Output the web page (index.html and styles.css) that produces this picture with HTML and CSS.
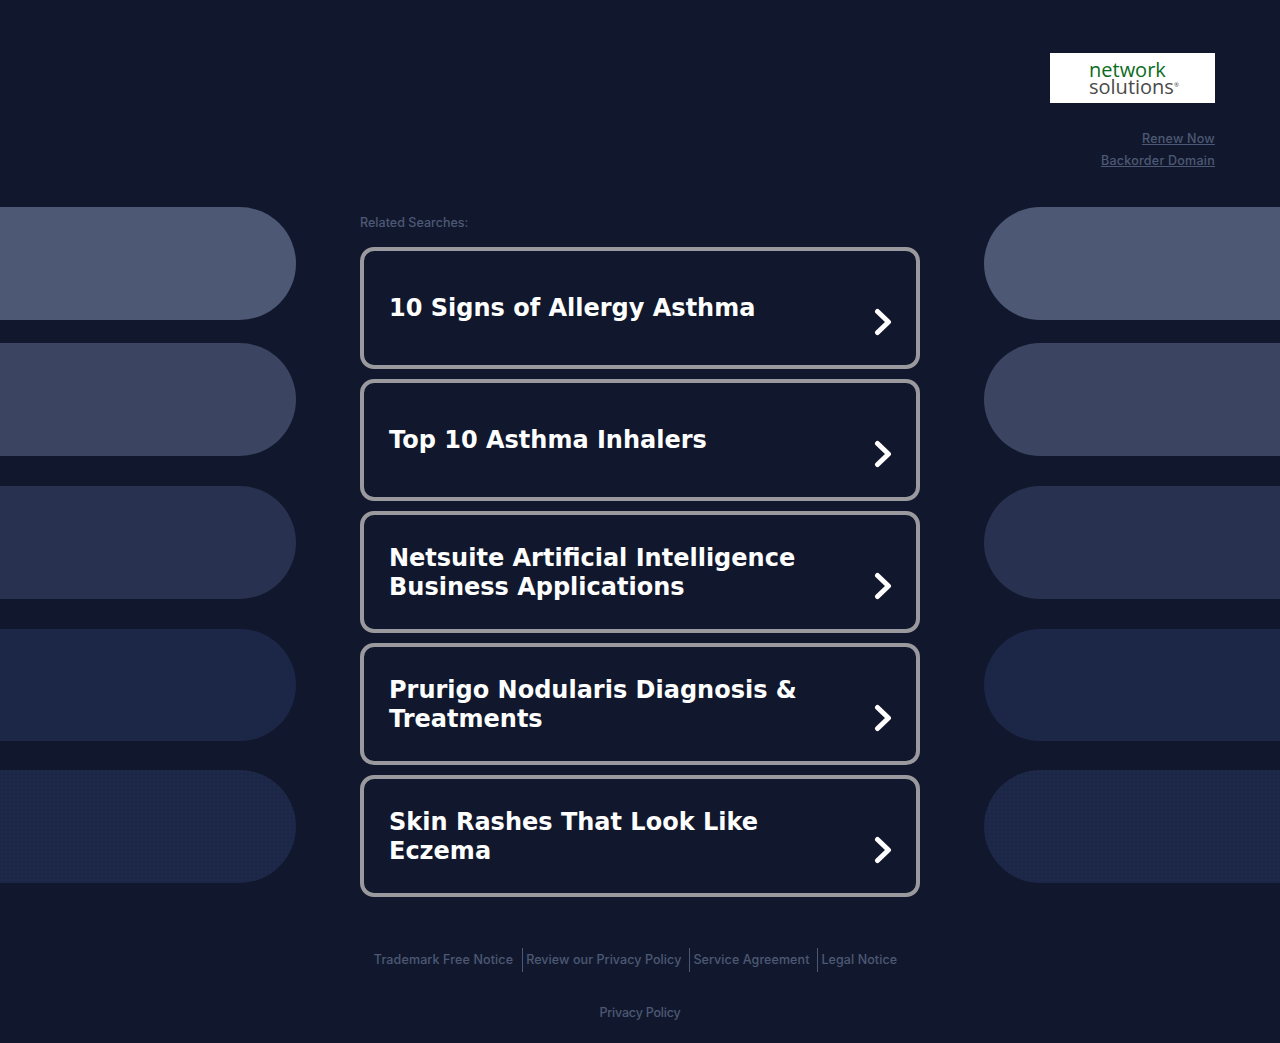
FILE: index.html
```html
<!DOCTYPE html>
<html lang="en">
<head>
<meta charset="utf-8">
<title>Related Searches</title>
<link rel="stylesheet" href="styles.css">
</head>
<body>
<div class="pills pills-left" aria-hidden="true">
  <div class="pill p1"></div><div class="pill p2"></div><div class="pill p3"></div><div class="pill p4"></div><div class="pill p5"></div>
</div>
<div class="pills pills-right" aria-hidden="true">
  <div class="pill p1"></div><div class="pill p2"></div><div class="pill p3"></div><div class="pill p4"></div><div class="pill p5"></div>
</div>
<header class="top">
  <div class="logo"><span class="logo-a">network</span><span class="logo-b">solutions<sup class="reg">®</sup></span></div>
  <a class="side-link first" href="#">Renew Now</a>
  <a class="side-link" href="#">Backorder Domain</a>
</header>
<main class="main">
  <div class="related">Related Searches:</div>
  <a class="card" href="#"><span class="card-text">10 Signs of Allergy Asthma</span><svg class="chev" viewBox="0 0 18 28"><path d="M3.500 3.500 L14.500 14 L3.500 24.500"/></svg></a>
  <a class="card" href="#"><span class="card-text">Top 10 Asthma Inhalers</span><svg class="chev" viewBox="0 0 18 28"><path d="M3.500 3.500 L14.500 14 L3.500 24.500"/></svg></a>
  <a class="card" href="#"><span class="card-text two">Netsuite Artificial Intelligence Business Applications</span><svg class="chev" viewBox="0 0 18 28"><path d="M3.500 3.500 L14.500 14 L3.500 24.500"/></svg></a>
  <a class="card" href="#"><span class="card-text two">Prurigo Nodularis Diagnosis &amp; Treatments</span><svg class="chev" viewBox="0 0 18 28"><path d="M3.500 3.500 L14.500 14 L3.500 24.500"/></svg></a>
  <a class="card" href="#"><span class="card-text two">Skin Rashes That Look Like Eczema</span><svg class="chev" viewBox="0 0 18 28"><path d="M3.500 3.500 L14.500 14 L3.500 24.500"/></svg></a>
</main>
<footer class="foot">
  <nav class="foot-links">
    <a class="foot-link" href="#">Trademark Free Notice</a>
    <a class="foot-link" href="#">Review our Privacy Policy</a>
    <a class="foot-link" href="#">Service Agreement</a>
    <a class="foot-link" href="#">Legal Notice</a>
  </nav>
  <a class="foot-privacy" href="#">Privacy Policy</a>
</footer>
</body>
</html>
```
FILE: styles.css
```css
* { box-sizing: border-box; }
html, body { margin: 0; padding: 0; }
body {
  position: relative;
  height: 1043px;
  overflow: hidden;
  background: #11182d;
  font-family: Inter, "DejaVu Sans", sans-serif;
}
a { text-decoration: none; }

.pills { position: absolute; top: 0; width: 296px; height: 0; }
.pills-left { left: 0; }
.pills-right { right: 0; }
.pill { position: absolute; left: 0; width: 296px; height: 113px; }
.pills-left .pill { border-radius: 0 57px 57px 0; }
.pills-right .pill { border-radius: 57px 0 0 57px; }
.p1 { top: 207px; background: #4d5874; }
.p2 { top: 343px; background: #3b4562; }
.p3 { top: 486px; background: #28314f; }
.p4 { top: 629px; height: 112px; background: #1c2747; }
.p5 {
  top: 770px;
  background-color: #1c2747;
  background-image: radial-gradient(rgba(255, 255, 255, 0.02) 1px, transparent 1px);
  background-size: 4px 4px;
}

.top {
  display: flex;
  flex-direction: column;
  align-items: flex-end;
  padding: 53px 65px 0 0;
  height: 207px;
}
.logo {
  width: 165px;
  height: 50px;
  background: #fff;
  display: flex;
  flex-direction: column;
  align-items: flex-start;
  justify-content: center;
  padding-left: 39px;
  font-family: "Open Sans", sans-serif;
}
.logo-a { color: #0a6b22; font-size: 20px; line-height: 17px; }
.logo-b { color: #4a4a4a; font-size: 20px; line-height: 17px; }
.reg { font-size: 6px; line-height: 0; vertical-align: 7px; }
.side-link {
  color: #4d5874;
  font-size: 12.500px;
  font-weight: 500;
  letter-spacing: 0.25px;
  line-height: 22px;
  text-decoration: underline;
}
.side-link.first { margin-top: 25px; }

.main {
  width: 560px;
  margin: 0 auto;
  display: flex;
  flex-direction: column;
  gap: 10px;
}
.related {
  color: #4d5874;
  font-size: 12.500px;
  font-weight: 500;
  letter-spacing: 0.03px;
  line-height: 16px;
  height: 30px;
  padding-top: 8px;
}
.card {
  height: 122px;
  border: 4px solid #9a9a9e;
  border-radius: 14px;
  padding: 0 25px;
  display: flex;
  align-items: center;
  justify-content: space-between;
  color: #fff;
}
.card-text {
  width: 440px;
  font-family: "DejaVu Sans", sans-serif;
  font-size: 24px;
  font-weight: 700;
  line-height: 28.800px;
}
.card-text.two { padding-top: 2px; }
.chev { width: 18px; height: 28px; margin: 28px -1px 0 0; flex: none; }
.chev path { fill: none; stroke: #fff; stroke-width: 5px; stroke-linecap: round; stroke-linejoin: round; }

.foot { display: flex; flex-direction: column; align-items: center; }
.foot-links { display: flex; margin-top: 51px; height: 24px; align-items: stretch; }
.foot-link { color: #4d5874; font-size: 12.500px; font-weight: 500; letter-spacing: 0.08px; line-height: 24px; padding: 0 8px 0 3px; border-left: 1px solid #4d5874; }
.foot-link:first-child { border-left: 0; letter-spacing: 0.13px; padding-right: 9px; }
.foot-link:last-child { padding-right: 12px; }
.foot-privacy { color: #4d5874; font-size: 12.500px; font-weight: 500; letter-spacing: -0.2px; line-height: 16px; margin-top: 33px; }
```
